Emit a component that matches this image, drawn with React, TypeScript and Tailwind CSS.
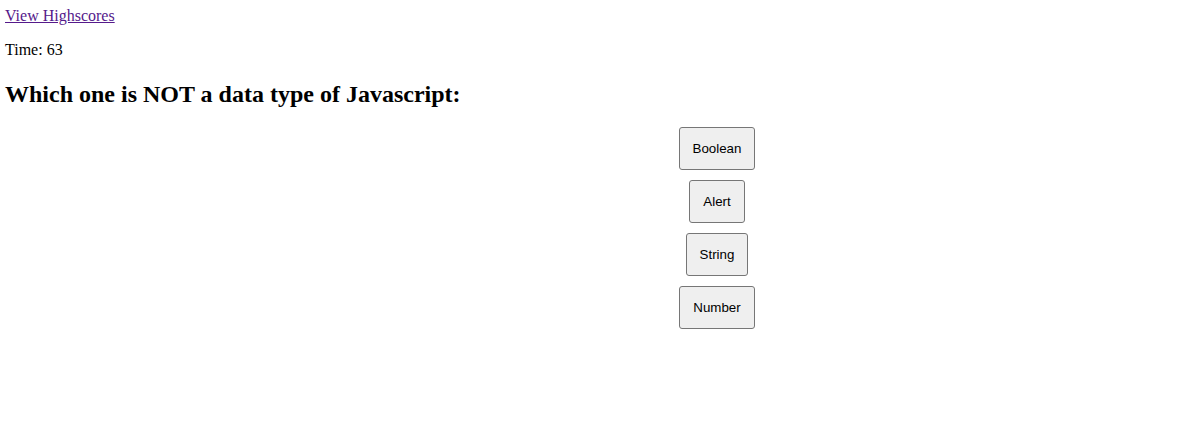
const answers = ['Boolean', 'Alert', 'String', 'Number'];

export default function App() {
  return (
    <div className="min-h-[438px] bg-white pl-[5px] pt-[7px] leading-[normal] text-black" style={{ fontFamily: '"Liberation Serif", "Times New Roman", serif' }}>
      <header>
        <a href="#" className="text-[16px] text-[#551a8b] underline">
          View Highscores
        </a>
        <p className="my-4 text-[16px]">Time: 63</p>
      </header>
      <main>
        <h2 className="mt-[21px] mb-[19px] text-[24px] font-bold leading-[28px]">
          Which one is NOT a data type of Javascript:
        </h2>
        <div className="flex flex-col items-center gap-[10px] pl-[236px]">
          {answers.map((a) => (
            <button
              key={a}
              className="rounded-[3px] border border-[#767676] bg-[#efefef] px-[13px] py-[13px] text-[13.33px] leading-[15px] text-black"
              style={{ fontFamily: '"Liberation Sans", Arial, sans-serif' }}
            >
              {a}
            </button>
          ))}
        </div>
      </main>
    </div>
  );
}
